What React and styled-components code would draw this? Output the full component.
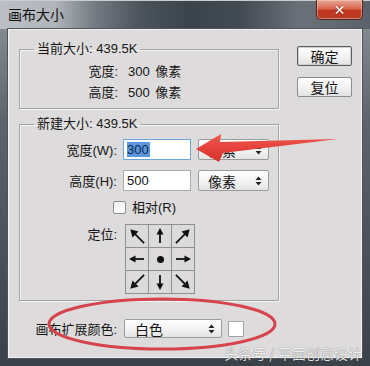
import React from "react";
import styled, { createGlobalStyle } from "styled-components";

const Global = createGlobalStyle`
  html, body { margin: 0; padding: 0; background: #fff; }
  * { box-sizing: border-box; }
`;

const FONT = `"Liberation Sans", "Noto Sans CJK SC", sans-serif`;

const Window = styled.div`
  position: relative;
  width: 370px;
  height: 366px;
  display: flex;
  flex-direction: column;
  overflow: hidden;
  font-family: ${FONT};
  font-size: 13px;
  color: #151515;
  background: linear-gradient(180deg, #8f959b 0, #5d646b 120px, #3b4148 366px);
`;

const TitleBar = styled.div`
  height: 29px;
  flex: none;
  display: flex;
  align-items: flex-start;
  border-top: 1px solid #c9cdd1;
  background: linear-gradient(
    90deg,
    #bcc0c4 0px,
    #b0b5ba 55px,
    #737a81 95px,
    #4c545b 140px,
    #3b444b 190px,
    #434b52 240px,
    #6a7178 300px,
    #5a616a 370px
  );
`;

const Title = styled.div`
  padding: 5px 0 0 8px;
  font-size: 14px;
  line-height: 18px;
  color: #111;
`;

const CloseButton = styled.div`
  margin-left: auto;
  margin-right: 7px;
  margin-top: -1px;
  width: 47px;
  height: 20px;
  border: 1px solid #4e2622;
  border-top: none;
  border-radius: 0 0 5px 5px;
  background: linear-gradient(180deg, #e7a999 0%, #d9674f 45%, #c2371f 55%, #b83a26 100%);
  box-shadow: inset 0 0 0 1px rgba(255, 220, 200, 0.45);
  display: flex;
  align-items: center;
  justify-content: center;
  color: #fff;
  font-family: "DejaVu Sans", sans-serif;
  font-weight: bold;
  font-size: 14px;
  text-shadow: 0 0 2px #6a1a10;
`;

const Client = styled.div`
  flex: 1;
  margin: 0 8px 8px 8px;
  background: #dddbdb;
  border: 1px solid #f2f2f2;
  box-shadow: 0 0 0 1px #4c535a;
  display: flex;
  gap: 18px;
  padding: 0 9px 0 10px;
`;

const LeftCol = styled.div`
  width: 260px;
  padding-top: 11px;
  display: flex;
  flex-direction: column;
`;

const Group = styled.fieldset`
  margin: ${(p) => p.$mt || 0}px 0 0 0;
  padding: ${(p) => p.$pt}px 0 ${(p) => p.$pb}px 0;
  border: 1px solid #a3a3a3;
  box-shadow: inset 1px 1px 0 #f3f3f3, 1px 1px 0 #f3f3f3;
  display: flex;
  flex-direction: column;
  gap: ${(p) => p.$gap || 0}px;
  min-width: 0;
`;

const Legend = styled.legend`
  margin-left: 14px;
  padding: 0 3px;
  line-height: 16px;
  font-size: 13px;
`;

const InfoRow = styled.div`
  display: flex;
  align-items: center;
  height: 21px;
`;

const Label = styled.div`
  width: ${(p) => p.$w}px;
  text-align: right;
  flex: none;
  white-space: nowrap;
`;

const Value = styled.div`
  margin-left: 10px;
  white-space: nowrap;
  word-spacing: 2px;
`;

const FormRow = styled.div`
  display: flex;
  align-items: ${(p) => p.$align || "center"};
  gap: ${(p) => p.$gap ?? 6}px;
  line-height: ${(p) => (p.$lh ? `${p.$lh}px` : "normal")};
  height: ${(p) => (p.$h ? `${p.$h}px` : "auto")};
`;

const TextInput = styled.div`
  width: 68px;
  height: 21px;
  background: #fff;
  border: 1px solid ${(p) => (p.$focus ? "#6fa6d9" : "#a9abb0")};
  display: flex;
  align-items: center;
  padding-left: 3px;
`;

const Selected = styled.span`
  background: #5b97dc;
  color: #0e2a52;
  line-height: 15px;
  padding-right: 1px;
`;

const Select = styled.div`
  margin-left: 1px;
  width: ${(p) => p.$w}px;
  height: ${(p) => p.$h}px;
  border: 1px solid #9c9c9c;
  border-radius: 2px;
  background: linear-gradient(180deg, #ffffff 0%, #f4f4f4 50%, #e4e4e4 100%);
  display: flex;
  align-items: center;
  padding: 0 6px 0 ${(p) => p.$pl}px;
  font-size: 14px;
`;

const SelectText = styled.span`
  flex: 1;
`;

const Spinner = () => (
  <svg width="7" height="10" viewBox="0 0 7 10">
    <path d="M3.5 0.5 L6.5 4 L0.5 4 Z M3.5 9.5 L6.5 6 L0.5 6 Z" fill="#222" />
  </svg>
);

const Checkbox = styled.div`
  margin-left: 93px;
  width: 13px;
  height: 13px;
  border: 1px solid #8e8f8f;
  border-radius: 2px;
  background: linear-gradient(180deg, #f0f0f0, #ffffff);
`;

const AnchorGrid = styled.div`
  display: grid;
  grid-template-columns: repeat(3, 22px);
  grid-auto-rows: 22px;
  gap: 1px;
  padding: 1px;
  background: #8f8f8f;
`;

const Cell = styled.div`
  background: #dcdada;
  display: flex;
  align-items: center;
  justify-content: center;
`;

const Arrow = ({ angle, diag }) => (
  <svg width="22" height="22" viewBox="0 0 22 22">
    <g transform={`rotate(${angle} 11 11)`}>
      <line
        x1="11"
        y1={diag ? 21 : 18}
        x2="11"
        y2={diag ? 7 : 8}
        stroke="#111"
        strokeWidth="1.8"
      />
      <path
        d={diag ? "M11 1.5 L15.2 8.8 L6.8 8.8 Z" : "M11 3 L14.5 9.5 L7.5 9.5 Z"}
        fill="#111"
      />
    </g>
  </svg>
);

const Dot = styled.div`
  width: 7px;
  height: 7px;
  border-radius: 50%;
  background: #111;
`;

const ColorRow = styled.div`
  margin-top: 18px;
  display: flex;
  align-items: center;
  gap: 6px;
`;

const Swatch = styled.div`
  width: 16px;
  height: 16px;
  background: #fff;
  border: 1px solid #a2a2a2;
  border-radius: 1px;
`;

const RightCol = styled.div`
  padding-top: 16px;
  display: flex;
  flex-direction: column;
  gap: 11px;
`;

const Button = styled.div`
  width: 55px;
  height: 20px;
  border: 1px solid ${(p) => (p.$default ? "#5f5f5f" : "#8c8c8c")};
  border-radius: 2px;
  background: linear-gradient(180deg, #ffffff 0%, #f3f3f3 50%, #e2e2e2 100%);
  box-shadow: inset 0 0 0 1px ${(p) => (p.$default ? "#cfcfcf" : "transparent")};
  display: flex;
  align-items: center;
  justify-content: center;
  font-size: 14px;
`;

const Overlay = styled.svg`
  position: absolute;
  left: 0;
  top: 0;
  pointer-events: none;
`;

const Watermark = styled.div`
  position: absolute;
  right: 8px;
  bottom: 5px;
  font-size: 14px;
  line-height: 16px;
  color: rgba(255, 255, 255, 0.88);
  text-shadow: 0 0 1px rgba(0, 0, 0, 0.6);
  font-family: "Noto Sans CJK SC", sans-serif;
`;

const arrows = [
  { a: -45, d: true },
  { a: 0 },
  { a: 45, d: true },
  { a: -90 },
  null,
  { a: 90 },
  { a: -135, d: true },
  { a: 180 },
  { a: 135, d: true },
];

export default function App() {
  return (
    <>
      <Global />
      <Window>
        <TitleBar>
          <Title>画布大小</Title>
          <CloseButton>✕</CloseButton>
        </TitleBar>
        <Client>
          <LeftCol>
            <Group $pt={3} $pb={6}>
              <Legend>当前大小: 439.5K</Legend>
              <InfoRow>
                <Label $w={98}>宽度:</Label>
                <Value>300 像素</Value>
              </InfoRow>
              <InfoRow>
                <Label $w={98}>高度:</Label>
                <Value>500 像素</Value>
              </InfoRow>
            </Group>
            <Group $mt={7} $pt={7} $pb={6} $gap={10}>
              <Legend>新建大小: 439.5K</Legend>
              <FormRow>
                <Label $w={97}>宽度(W):</Label>
                <TextInput $focus>
                  <Selected>300</Selected>
                </TextInput>
                <Select $w={71} $h={21} $pl={9}>
                  <SelectText>像素</SelectText>
                  <Spinner />
                </Select>
              </FormRow>
              <FormRow>
                <Label $w={97}>高度(H):</Label>
                <TextInput>500</TextInput>
                <Select $w={71} $h={21} $pl={9}>
                  <SelectText>像素</SelectText>
                  <Spinner />
                </Select>
              </FormRow>
              <FormRow $gap={6} $lh={13} $h={13}>
                <Checkbox />
                <span>相对(R)</span>
              </FormRow>
              <FormRow $align="flex-start" $gap={8}>
                <Label $w={97}>定位:</Label>
                <AnchorGrid>
                  {arrows.map((ar, i) => (
                    <Cell key={i}>
                      {ar ? <Arrow angle={ar.a} diag={ar.d} /> : <Dot />}
                    </Cell>
                  ))}
                </AnchorGrid>
              </FormRow>
            </Group>
            <ColorRow>
              <Label $w={98}>画布扩展颜色:</Label>
              <Select $w={98} $h={19} $pl={10}>
                <SelectText>白色</SelectText>
                <Spinner />
              </Select>
              <Swatch />
            </ColorRow>
          </LeftCol>
          <RightCol>
            <Button $default>确定</Button>
            <Button>复位</Button>
          </RightCol>
        </Client>
        <Overlay width="370" height="366" viewBox="0 0 370 366">
          <defs>
            <linearGradient id="ra" x1="0" y1="0" x2="0" y2="1">
              <stop offset="0" stopColor="#f0564c" />
              <stop offset="1" stopColor="#d8302c" />
            </linearGradient>
          </defs>
          <ellipse
            cx="162"
            cy="324"
            rx="113"
            ry="25"
            fill="none"
            stroke="#d7434c"
            strokeWidth="3"
          />
          <path
            d="M196 149 L221 134 L220 142 L338 139 L223 153 L219 162 Z"
            fill="url(#ra)"
          />
        </Overlay>
        <Watermark>头条号 / 平面创意设计</Watermark>
      </Window>
    </>
  );
}
